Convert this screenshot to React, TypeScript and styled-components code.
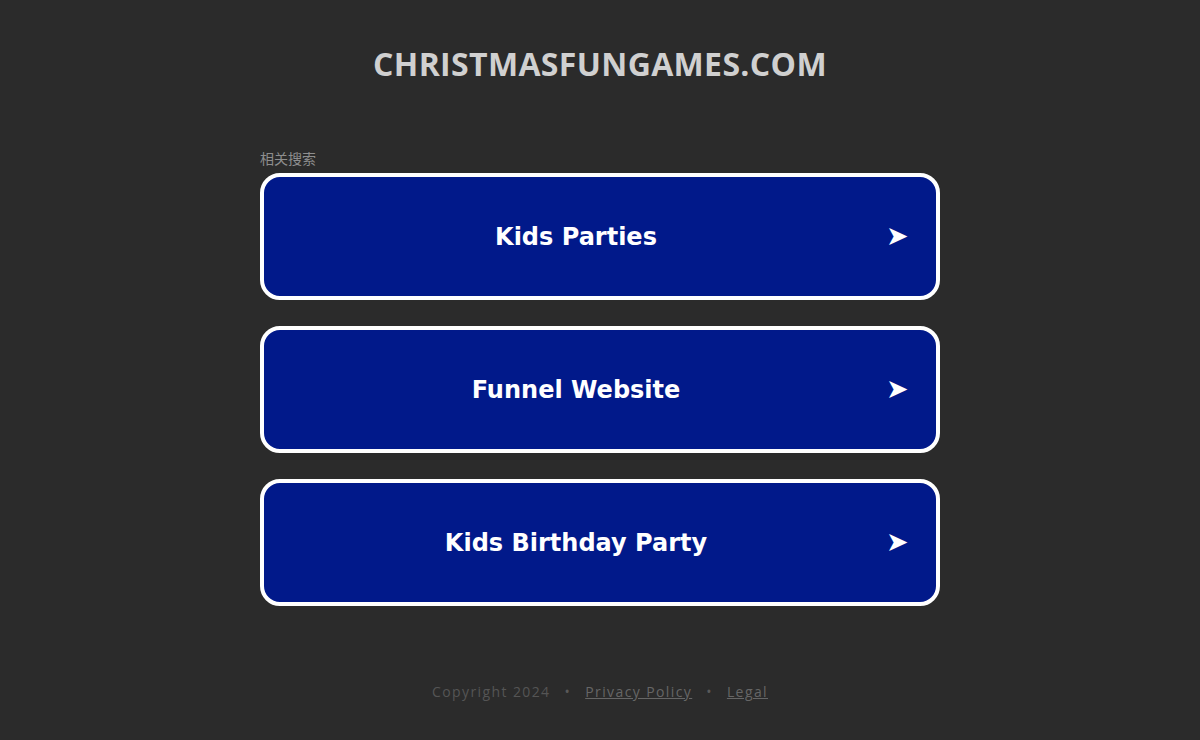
import React from "react";
import styled, { createGlobalStyle } from "styled-components";

const Global = createGlobalStyle`
  html, body { margin: 0; padding: 0; background: #2b2b2b; }
  body { font-family: "Open Sans", "Liberation Sans", sans-serif; }
`;

const Page = styled.div`
  min-height: 740px;
  display: flex;
  flex-direction: column;
  align-items: center;
  background: #2b2b2b;
`;

const Title = styled.h1`
  margin: 42px 0 0;
  font-family: "Open Sans", "Liberation Sans", sans-serif;
  font-weight: 700;
  font-size: 32px;
  line-height: 44px;
  color: #d0d0d0;
  letter-spacing: 0.35px;
`;

const Section = styled.div`
  width: 680px;
  margin-top: 64px;
  display: flex;
  flex-direction: column;
`;

const Label = styled.div`
  font-family: "Noto Sans CJK SC", sans-serif;
  font-size: 14px;
  line-height: 16px;
  color: #8e8e8e;
  margin-bottom: 7px;
`;

const List = styled.div`
  display: flex;
  flex-direction: column;
  gap: 26px;
`;

const Card = styled.a`
  box-sizing: border-box;
  height: 127px;
  display: flex;
  align-items: center;
  background: #01198a;
  border: 4px solid #ffffff;
  border-radius: 20px;
  padding: 0 28px 2px 0;
  color: #ffffff;
  text-decoration: none;
  cursor: pointer;
`;

const CardText = styled.span`
  flex: 1;
  text-align: center;
  font-family: "DejaVu Sans", Verdana, sans-serif;
  font-weight: 700;
  font-size: 24px;
  margin-top: 2px;
  padding-left: 2px;
`;

const Arrow = styled.span`
  width: 22px;
  font-family: "DejaVu Sans", sans-serif;
  font-size: 27px;
  line-height: 1;
  color: #ffffff;
`;

const Footer = styled.div`
  margin-top: 76px;
  display: flex;
  align-items: center;
  gap: 14px;
  font-family: "Open Sans", "Liberation Sans", sans-serif;
  font-size: 14px;
  letter-spacing: 1.4px;
  color: #555555;
`;

const FooterLink = styled.a`
  color: #666666;
  text-decoration: underline;
`;

const Dot = styled.span`
  color: #595959;
`;

const items = ["Kids Parties", "Funnel Website", "Kids Birthday Party"];

export default function App() {
  return (
    <>
      <Global />
      <Page>
        <Title>CHRISTMASFUNGAMES.COM</Title>
        <Section>
          <Label>相关搜索</Label>
          <List>
            {items.map((t) => (
              <Card key={t}>
                <CardText>{t}</CardText>
                <Arrow>➤</Arrow>
              </Card>
            ))}
          </List>
        </Section>
        <Footer>
          <span>Copyright 2024</span>
          <Dot>•</Dot>
          <FooterLink>Privacy Policy</FooterLink>
          <Dot>•</Dot>
          <FooterLink>Legal</FooterLink>
        </Footer>
      </Page>
    </>
  );
}
